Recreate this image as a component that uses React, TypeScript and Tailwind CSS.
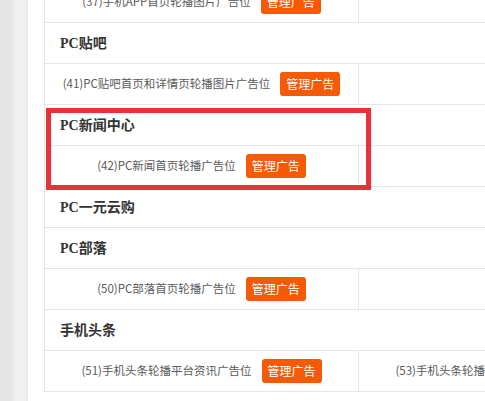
const font = { fontFamily: '"Liberation Serif", "Noto Sans CJK SC", serif' };
const cjk = { fontFamily: '"Noto Sans CJK SC", sans-serif' };

type Row =
  | { kind: "head"; title: string }
  | { kind: "items"; items: string[] };

const rows: Row[] = [
  { kind: "items", items: ["(37)手机APP首页轮播图片广告位"] },
  { kind: "head", title: "PC贴吧" },
  { kind: "items", items: ["(41)PC贴吧首页和详情页轮播图片广告位"] },
  { kind: "head", title: "PC新闻中心" },
  { kind: "items", items: ["(42)PC新闻首页轮播广告位"] },
  { kind: "head", title: "PC一元云购" },
  { kind: "head", title: "PC部落" },
  { kind: "items", items: ["(50)PC部落首页轮播广告位"] },
  { kind: "head", title: "手机头条" },
  {
    kind: "items",
    items: ["(51)手机头条轮播平台资讯广告位", "(53)手机头条轮播平台资讯广告位"],
  },
];

function AdCell({ label }: { label: string }) {
  return (
    <div className="flex w-[314px] shrink-0 items-center justify-center gap-[10px] border-r border-[#e6e6e6]">
      <span className="whitespace-nowrap text-[11.5px] text-[#5a5a5a]" style={cjk}>
        {label}
      </span>
      <button
        className="h-6 w-[60px] rounded-[3px] bg-[#f55b07] text-[12px] text-white"
        style={cjk}
      >
        管理广告
      </button>
    </div>
  );
}

export default function App() {
  return (
    <div className="flex h-[401px] w-[485px] overflow-hidden bg-white">
      {/* side strips */}
      <div className="w-[13px] shrink-0 bg-[#e6e6e6]" />
      <div className="w-[15px] shrink-0 border-r border-[#e9e9e9] bg-[#f0f0f0]" />
      <div className="w-[16px] shrink-0 bg-white" />

      <div className="relative flex-1">
        <div className="-mt-[18px] w-[800px] border-l border-[#e6e6e6]">
          {rows.map((row, i) =>
            row.kind === "head" ? (
              <div
                key={i}
                className="flex h-[41px] items-center border-b border-[#e6e6e6] pl-[15px] text-[14px] font-bold text-[#333]"
                style={font}
              >
                {row.title}
              </div>
            ) : (
              <div key={i} className="flex h-[41px] border-b border-[#e6e6e6]">
                {row.items.map((it) => (
                  <AdCell key={it} label={it} />
                ))}
              </div>
            )
          )}
        </div>

        {/* highlight annotation */}
        <div className="absolute left-[2px] top-[108px] h-[82px] w-[325px] border-[5px] border-[#e8313b]" />
      </div>
    </div>
  );
}
